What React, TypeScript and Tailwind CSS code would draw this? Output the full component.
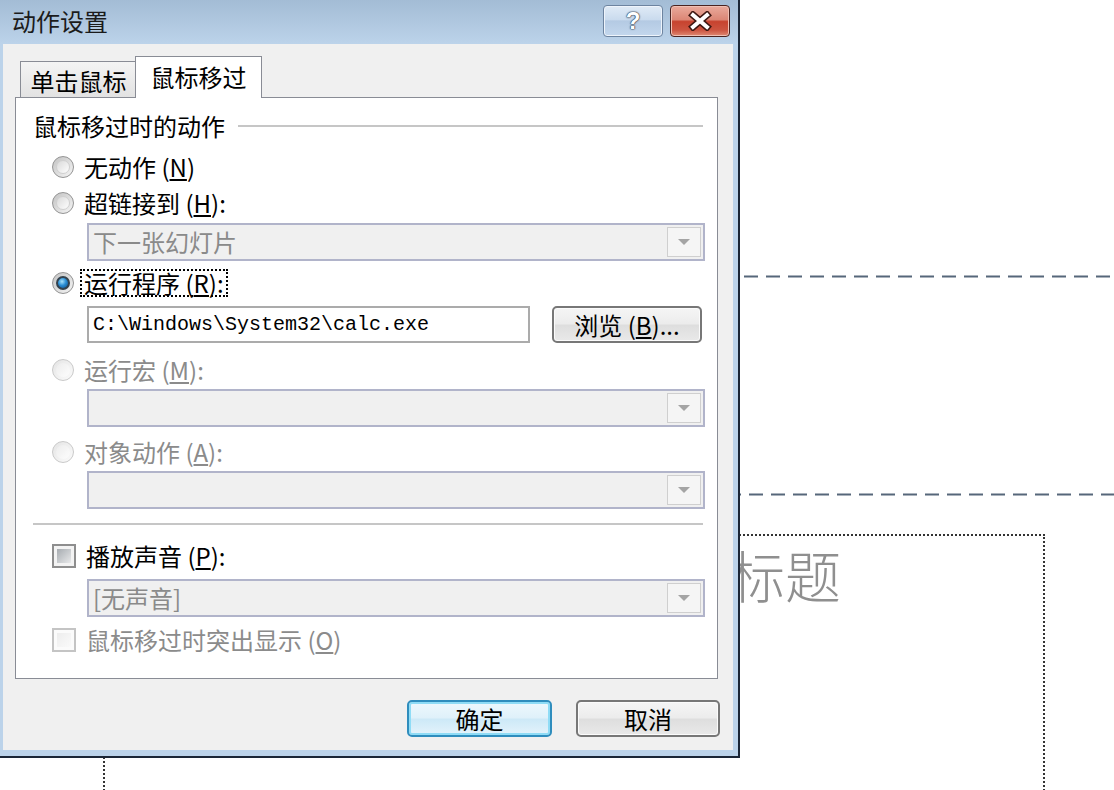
import type { ReactNode } from "react";

const cjk = "[font-family:'Noto_Sans_CJK_SC',sans-serif]";

const Key = ({ k }: { k: string }) => (
  <>
    {" "}(<span className="underline underline-offset-2">{k}</span>)
  </>
);

const Radio = ({ checked = false, disabled = false }: { checked?: boolean; disabled?: boolean }) => {
  const outer = disabled
    ? "border-[#cacaca] bg-[linear-gradient(135deg,#e4e4e4,#fbfbfb)]"
    : "border-[#949494] bg-[linear-gradient(135deg,#c2c2c2,#f6f6f6)]";
  return (
    <span className={`flex h-[22px] w-[22px] shrink-0 items-center justify-center rounded-full border ${outer}`}>
      {checked ? (
        <span className="h-[14px] w-[14px] rounded-full border-2 border-[#34424d] bg-[radial-gradient(circle_at_40%_35%,#a8e2fb_0%,#2a8ed4_45%,#0b4a86_100%)]" />
      ) : (
        <span
          className={`h-[14px] w-[14px] rounded-full ${
            disabled
              ? "bg-[linear-gradient(135deg,#ececec,#fdfdfd)]"
              : "border border-[#d0d0d0] bg-[linear-gradient(135deg,#dadada,#fefefe)]"
          }`}
        />
      )}
    </span>
  );
};

const Check = ({ disabled = false }: { disabled?: boolean }) => (
  <span
    className={`flex h-[24px] w-[24px] shrink-0 items-center justify-center border-2 ${
      disabled ? "border-[#c4c4c4] bg-[#fbfbfb]" : "border-[#8e8e8e] bg-[#f3f3f3]"
    }`}
  >
    <span
      className={`h-[14px] w-[14px] ${
        disabled ? "bg-[linear-gradient(135deg,#ededed,#fafafa)]" : "bg-[linear-gradient(135deg,#a6abb0,#e8e9ea)]"
      }`}
    />
  </span>
);

interface OptionProps {
  control: ReactNode;
  children: ReactNode;
  disabled?: boolean;
  focused?: boolean;
  className: string;
}

const Option = ({ control, children, disabled, focused, className }: OptionProps) => (
  <div className={`flex h-[28px] items-center pl-[19px] ${className}`}>
    {control}
    <span
      className={`ml-[6px] flex h-[28px] items-center border-2 px-[2px] ${
        focused ? "border-dotted border-black" : "border-transparent"
      } ${disabled ? "text-[#8b8b8b]" : "text-black"}`}
    >
      {children}
    </span>
  </div>
);

const Combo = ({ value, className }: { value?: string; className: string }) => (
  <div className={`ml-[54px] flex h-[38px] items-center border-2 border-[#b1b4ca] bg-[#f0f0f0] ${className}`}>
    <span className="pl-[4px] text-[#8a8a8a]">{value}</span>
    <span className="ml-auto mr-[2px] flex h-[30px] w-[34px] items-center justify-center border border-[#cfcfcf] bg-[#f5f5f5]">
      <svg width="14" height="8" viewBox="0 0 14 8">
        <path d="M1 1h12L7 7z" fill="#a4a4a4" />
      </svg>
    </span>
  </div>
);

const DialogButton = ({ label, primary, className }: { label: ReactNode; primary?: boolean; className: string }) => (
  <button
    className={`flex h-[37px] items-center justify-center rounded-[5px] border-2 text-black ${
      primary
        ? "border-[#2f8dbd] bg-[linear-gradient(180deg,#eef8fd_0%,#dff1fa_48%,#cde9f7_52%,#e4f3fb_100%)] shadow-[inset_0_0_0_2px_#8fdcf6]"
        : "border-[#777777] bg-[linear-gradient(180deg,#f5f5f5_0%,#ececec_48%,#dedede_52%,#e9e9e9_100%)] shadow-[inset_0_0_0_1px_#fbfbfb]"
    } ${className}`}
  >
    {label}
  </button>
);

const ActionSettings = () => (
  <div className="absolute left-0 top-0 flex h-[758px] w-[740px] flex-col border-b-2 border-r-2 border-[#1b2636] bg-[linear-gradient(180deg,#a3bcd5_0px,#bcd3ea_44px,#bcd3ea_100%)]">
    {/* caption */}
    <div className="flex h-[44px] shrink-0 items-start pr-[8px]">
      <span className="ml-[12px] mt-[9px] text-[24px] leading-none text-[#1b1b1b]">动作设置</span>
      <div className="ml-auto mt-[5px] flex gap-[7px]">
        <span className="flex h-[32px] w-[60px] items-center justify-center rounded-[4px] border border-[#6d84a0] bg-[linear-gradient(180deg,#e0ebf6_0%,#cadbee_45%,#b4cae3_50%,#c3d7ed_100%)] shadow-[inset_0_0_0_1px_#eef4fb]">
          <span className="[font-family:'Liberation_Sans',sans-serif] text-[24px] font-bold leading-none text-white [text-shadow:0_0_2px_#26364a,0_0_1px_#26364a,0_0_1px_#26364a]">
            ?
          </span>
        </span>
        <span className="flex h-[32px] w-[60px] items-center justify-center rounded-[4px] border border-[#4a2320] bg-[linear-gradient(180deg,#eaaa9c_0%,#dc8776_45%,#c7432f_52%,#cc5440_80%,#df8a74_100%)] shadow-[inset_0_0_0_1px_#f0c0b4]">
          <svg width="28" height="20" viewBox="0 0 28 20">
            <path d="M7 4 L21 16 M21 4 L7 16" stroke="#3d1712" strokeWidth="7" strokeLinecap="square" />
            <path d="M7 4 L21 16 M21 4 L7 16" stroke="#ffffff" strokeWidth="4" strokeLinecap="square" />
          </svg>
        </span>
      </div>
    </div>

    {/* client area */}
    <div className="mb-[6px] ml-[3px] mr-[5px] flex flex-1 flex-col bg-[#f0f0f0] text-[24px] leading-none">
      <div className="mt-[12px] flex h-[41px] items-end pl-[17px]">
        <span className="flex h-[36px] w-[117px] items-center justify-center border border-b-0 border-[#898c95] bg-[linear-gradient(180deg,#f4f4f4,#e2e2e2)] pt-[2px]">
          单击鼠标
        </span>
        <span className="relative z-10 -mb-px -ml-[2px] flex h-[42px] w-[127px] items-center justify-center border border-b-0 border-[#898c95] bg-white pb-[2px]">
          鼠标移过
        </span>
      </div>

      <div className="ml-[12px] mr-[15px] flex h-[582px] flex-col border border-[#898c95] bg-white pl-[17px] pr-[12px]">
        <div className="mt-[14px] flex h-[28px] items-center">
          <span>鼠标移过时的动作</span>
          <span className="ml-[13px] mr-[2px] h-[2px] flex-1 bg-[#c6c6c6]" />
        </div>

        <Option control={<Radio />} className="mt-[13px]">
          无动作<Key k="N" />
        </Option>
        <Option control={<Radio />} className="mt-[8px]">
          超链接到<Key k="H" />:
        </Option>
        <Combo value="下一张幻灯片" className="mt-[6px]" />

        <Option control={<Radio checked />} focused className="mt-[8px]">
          运行程序<Key k="R" />:
        </Option>
        <div className="ml-[54px] mt-[9px] flex h-[37px] items-center">
          <span className="flex h-[37px] w-[443px] items-center border-2 border-[#ababab] bg-white pl-[4px] [font-family:'Liberation_Mono',monospace] text-[20px] text-black">
            {"C:\\Windows\\System32\\calc.exe"}
          </span>
          <DialogButton
            label={
              <>
                浏览<Key k="B" />...
              </>
            }
            className="ml-auto mr-[3px] w-[150px]"
          />
        </div>

        <Option control={<Radio disabled />} disabled className="mt-[13px]">
          运行宏<Key k="M" />:
        </Option>
        <Combo className="mt-[5px]" />

        <Option control={<Radio disabled />} disabled className="mt-[11px]">
          对象动作<Key k="A" />:
        </Option>
        <Combo className="mt-[5px]" />

        <div className="mr-[2px] mt-[14px] h-[2px] bg-[#c6c6c6]" />

        <Option control={<Check />} className="mt-[17px]">
          播放声音<Key k="P" />:
        </Option>
        <Combo value="[无声音]" className="mt-[9px]" />
        <Option control={<Check disabled />} disabled className="mt-[9px]">
          鼠标移过时突出显示<Key k="O" />
        </Option>
      </div>

      <div className="mt-[21px] flex justify-end gap-[24px] pr-[13px]">
        <DialogButton label="确定" primary className="w-[145px]" />
        <DialogButton label="取消" className="w-[144px]" />
      </div>
    </div>
  </div>
);

export default function App() {
  return (
    <div className={`relative h-[790px] w-[1114px] overflow-hidden bg-white ${cjk}`}>
      {/* slide guides */}
      <svg className="absolute left-[700px] top-[275px]" width="414" height="3">
        <line x1="0" y1="1.5" x2="414" y2="1.5" stroke="#56677a" strokeWidth="2" strokeDasharray="14 8" />
      </svg>
      <svg className="absolute left-[705px] top-[493px]" width="409" height="3">
        <line x1="0" y1="1.5" x2="409" y2="1.5" stroke="#56677a" strokeWidth="2" strokeDasharray="14 8" />
      </svg>

      {/* title placeholder */}
      <div className="absolute left-[103px] top-[534px] flex h-[300px] w-[942px] justify-end border-2 border-dotted border-[#333333] pr-[202px] pt-[10px]">
        <span className="text-[56px] font-light leading-none text-[#8f8f8f]">单击此处添加标题</span>
      </div>

      <ActionSettings />
    </div>
  );
}
